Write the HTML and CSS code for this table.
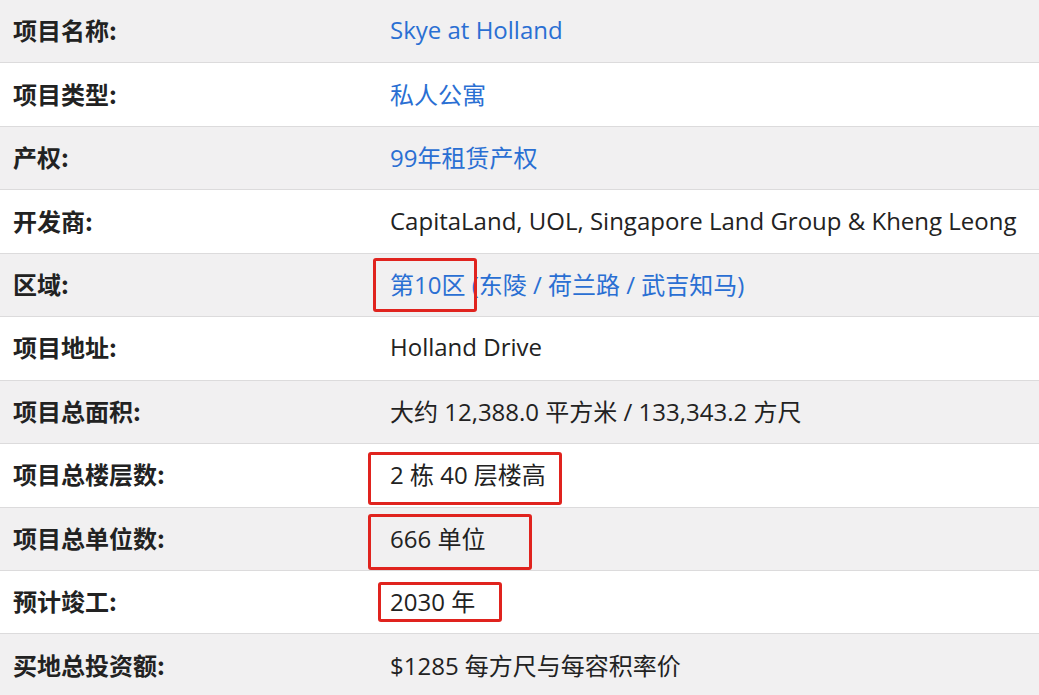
FILE: index.html
```html
<!DOCTYPE html>
<html lang="zh">
<head>
<meta charset="utf-8">
<link rel="stylesheet" href="styles.css">
</head>
<body>
<div class="sheet">
  <div class="row odd"><div class="label">项目名称:</div><div class="value link">Skye at Holland</div></div>
  <div class="row"><div class="label">项目类型:</div><div class="value link">私人公寓</div></div>
  <div class="row odd"><div class="label">产权:</div><div class="value link">99年租赁产权</div></div>
  <div class="row"><div class="label">开发商:</div><div class="value">CapitaLand, UOL, Singapore Land Group &amp; Kheng Leong</div></div>
  <div class="row odd"><div class="label">区域:</div><div class="value link">第10区 (东陵 / 荷兰路 / 武吉知马)</div></div>
  <div class="row"><div class="label">项目地址:</div><div class="value">Holland Drive</div></div>
  <div class="row odd"><div class="label">项目总面积:</div><div class="value">大约 12,388.0 平方米 / 133,343.2 方尺</div></div>
  <div class="row"><div class="label">项目总楼层数:</div><div class="value">2 栋 40 层楼高</div></div>
  <div class="row odd"><div class="label">项目总单位数:</div><div class="value">666 单位</div></div>
  <div class="row"><div class="label">预计竣工:</div><div class="value">2030 年</div></div>
  <div class="row odd"><div class="label">买地总投资额:</div><div class="value">$1285 每方尺与每容积率价</div></div>

  <div class="mark m1"></div>
  <div class="mark m2"></div>
  <div class="mark m3"></div>
  <div class="mark m4"></div>
</div>
</body>
</html>
```

FILE: styles.css
```css
html, body {
  margin: 0;
  padding: 0;
  background: #ffffff;
}

.sheet {
  position: relative;
  width: 1039px;
  height: 695px;
  overflow: hidden;
  font-family: "Open Sans", "Noto Sans CJK SC", sans-serif;
  color: #222222;
}

.row {
  display: flex;
  align-items: center;
  box-sizing: border-box;
  height: 63.44px;
  padding-bottom: 3px;
  border-bottom: 1px solid #dcdbdc;
  background: #ffffff;
}

.row.odd {
  background: #f1f0f1;
}

.label {
  width: 390px;
  padding-left: 13px;
  box-sizing: border-box;
  flex: none;
  font-family: "Noto Sans CJK SC", sans-serif;
  font-weight: 700;
  font-size: 24px;
  color: #222222;
}

.value {
  font-size: 24px;
  color: #222222;
  white-space: nowrap;
}

.value.link {
  color: #2a6fd3;
}

.mark {
  position: absolute;
  border: 3px solid #e0231e;
  border-radius: 3px;
  box-sizing: border-box;
}

.m1 { left: 373px; top: 258px; width: 104px; height: 54px; }
.m2 { left: 368px; top: 452px; width: 194px; height: 53px; }
.m3 { left: 368px; top: 514px; width: 164px; height: 56px; }
.m4 { left: 378px; top: 582px; width: 124px; height: 40px; }
```
